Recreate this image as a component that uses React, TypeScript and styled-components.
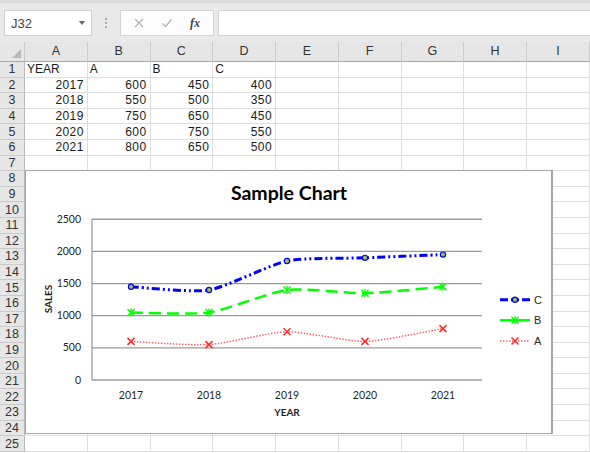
import React from 'react';
import styled, { createGlobalStyle } from 'styled-components';

const GlobalStyle = createGlobalStyle`
  html, body {
    margin: 0;
    padding: 0;
    background: #ffffff;
    overflow: hidden;
  }
  body {
    font-family: "Liberation Sans", Arial, sans-serif;
  }
`;

const COL_W = 62.75;
const ROW_H = 15.6;
const COLUMNS = ['A', 'B', 'C', 'D', 'E', 'F', 'G', 'H', 'I'];
const ROW_COUNT = 25;

const TABLE: (string | number)[][] = [
  ['YEAR', 'A', 'B', 'C'],
  [2017, 600, 450, 400],
  [2018, 550, 500, 350],
  [2019, 750, 650, 450],
  [2020, 600, 750, 550],
  [2021, 800, 650, 500],
];

const Page = styled.div`
  position: relative;
  width: 590px;
  height: 453px;
  overflow: hidden;
  background: #ffffff;
`;

/* ---------- formula bar ---------- */

const Toolbar = styled.div`
  display: flex;
  align-items: flex-start;
  height: 42px;
  padding: 7px 0 0 4px;
  box-sizing: border-box;
  background: #e9e9e9;
  border-top: 3px solid #dcdcdc;
`;

const NameBox = styled.div`
  display: flex;
  align-items: center;
  justify-content: space-between;
  width: 88px;
  height: 26px;
  box-sizing: border-box;
  padding: 0 6px 0 6px;
  background: #ffffff;
  border: 1px solid #cfcfcf;
  font-size: 13px;
  color: #444444;
`;

const Caret = styled.span`
  width: 0;
  height: 0;
  border-left: 3.5px solid transparent;
  border-right: 3.5px solid transparent;
  border-top: 4px solid #666666;
`;

const Grip = styled.div`
  display: flex;
  flex-direction: column;
  justify-content: center;
  gap: 2px;
  width: 28px;
  height: 26px;
  align-items: center;
`;

const GripDot = styled.span`
  width: 2px;
  height: 2px;
  background: #a8a8a8;
`;

const FormulaButtons = styled.div`
  display: flex;
  align-items: center;
  justify-content: space-around;
  width: 94px;
  height: 26px;
  box-sizing: border-box;
  padding: 0 4px;
  background: #fdfdfd;
  border: 1px solid #d4d4d4;
`;

const FxLabel = styled.span`
  font-family: "Liberation Serif", "Times New Roman", serif;
  font-style: italic;
  font-weight: bold;
  font-size: 12px;
  color: #444444;
  width: 14px;
  text-align: center;
`;

const FormulaInput = styled.div`
  flex: 1;
  height: 26px;
  margin-left: 4px;
  box-sizing: border-box;
  background: #ffffff;
  border: 1px solid #d4d4d4;
  border-right: none;
`;

/* ---------- sheet grid ---------- */

const Sheet = styled.div`
  display: grid;
  grid-template-columns: 25px repeat(${COLUMNS.length}, ${COL_W}px);
  grid-template-rows: 20px repeat(${ROW_COUNT}, ${ROW_H}px);
  font-size: 12px;
`;

const Corner = styled.div`
  position: relative;
  background: #e6e6e6;
  border-bottom: 1px solid #a8a8a8;
  border-right: 1px solid #c8c8c8;
  box-sizing: border-box;
`;

const CornerMark = styled.span`
  position: absolute;
  right: 3px;
  bottom: 3px;
  width: 0;
  height: 0;
  border-left: 9px solid transparent;
  border-bottom: 9px solid #b8b8b8;
`;

const ColHeader = styled.div`
  display: flex;
  align-items: flex-end;
  justify-content: center;
  padding-bottom: 1px;
  box-sizing: border-box;
  background: #e6e6e6;
  border-bottom: 1px solid #a8a8a8;
  border-right: 1px solid #cacaca;
  color: #333333;
  font-size: 12.5px;
  line-height: 17px;
`;

const RowHeader = styled.div`
  display: flex;
  align-items: center;
  justify-content: center;
  box-sizing: border-box;
  background: #e6e6e6;
  border-bottom: 1px solid #cacaca;
  border-right: 1px solid #b8b8b8;
  color: #333333;
  font-size: 12.5px;
`;

const Cell = styled.div<{ $numeric: boolean }>`
  display: flex;
  align-items: center;
  justify-content: ${(p) => (p.$numeric ? 'flex-end' : 'flex-start')};
  padding: 0 3px 0 2px;
  box-sizing: border-box;
  border-bottom: 1px solid #dedede;
  border-right: 1px solid #dedede;
  color: #1a1a1a;
  font-size: 12px;
  letter-spacing: ${(p) => (p.$numeric ? '0.4px' : '0')};
  white-space: nowrap;
  overflow: hidden;
`;

/* ---------- chart ---------- */

const ChartFrame = styled.div`
  position: absolute;
  left: 25px;
  top: 170px;
  width: 528px;
  height: 264px;
  box-sizing: border-box;
  background: #ffffff;
  border: 1px solid #a6a6a6;
  border-right-width: 2px;
`;

const ChartSvg = styled.svg`
  display: block;
  font-family: Lato, "Open Sans", sans-serif;
`;

type Pt = [number, number];

const PLOT_LEFT = 66;
const PLOT_RIGHT = 456;
const Y0 = 209;
const SCALE = 32.15 / 500;
const CAT_X = [105, 183, 261, 339, 417];
const YEARS = ['2017', '2018', '2019', '2020', '2021'];
const SMOOTH = 9;

const yOf = (v: number) => Y0 - v * SCALE;

const smoothPath = (pts: Pt[]) => {
  let d = `M${pts[0][0]},${pts[0][1]}`;
  for (let i = 0; i < pts.length - 1; i++) {
    const p0 = pts[i - 1] ?? pts[i];
    const p1 = pts[i];
    const p2 = pts[i + 1];
    const p3 = pts[i + 2] ?? p2;
    const c1: Pt = [p1[0] + (p2[0] - p0[0]) / SMOOTH, p1[1] + (p2[1] - p0[1]) / SMOOTH];
    const c2: Pt = [p2[0] - (p3[0] - p1[0]) / SMOOTH, p2[1] - (p3[1] - p1[1]) / SMOOTH];
    d += ` C${c1[0]},${c1[1]} ${c2[0]},${c2[1]} ${p2[0]},${p2[1]}`;
  }
  return d;
};

type MarkerKind = 'dot' | 'star' | 'cross';

interface Series {
  name: string;
  values: number[];
  color: string;
  width: number;
  dash: string;
  legendDash: string;
  marker: MarkerKind;
  opacity: number;
}

const a = TABLE.slice(1).map((r) => r[1] as number);
const b = TABLE.slice(1).map((r, i) => (r[2] as number) + a[i]);
const c = TABLE.slice(1).map((r, i) => (r[3] as number) + b[i]);

const SERIES: Series[] = [
  { name: 'C', values: c, color: '#0000ff', width: 3, dash: '8 3 2 3 2 3', legendDash: '8 3', marker: 'dot', opacity: 1 },
  { name: 'B', values: b, color: '#00ff00', width: 2.5, dash: '12 6', legendDash: 'none', marker: 'star', opacity: 1 },
  { name: 'A', values: a, color: '#ff3030', width: 1.5, dash: '1.5 1.5', legendDash: '1.5 1.5', marker: 'cross', opacity: 0.75 },
];

const Marker: React.FC<{ x: number; y: number; kind: MarkerKind; color: string }> = ({ x, y, kind, color }) => {
  if (kind === 'dot') {
    return <circle cx={x} cy={y} r={2.6} fill="#a3c43c" stroke={color} strokeWidth={1.2} />;
  }
  if (kind === 'star') {
    return (
      <g stroke={color} strokeWidth={1.4}>
        <line x1={x - 3.5} y1={y - 3.5} x2={x + 3.5} y2={y + 3.5} />
        <line x1={x - 3.5} y1={y + 3.5} x2={x + 3.5} y2={y - 3.5} />
        <line x1={x} y1={y - 4} x2={x} y2={y + 4} />
      </g>
    );
  }
  return (
    <g stroke={color} strokeWidth={1.6}>
      <line x1={x - 3.5} y1={y - 3.5} x2={x + 3.5} y2={y + 3.5} />
      <line x1={x - 3.5} y1={y + 3.5} x2={x + 3.5} y2={y - 3.5} />
    </g>
  );
};

const LEGEND_Y = [128.7, 149.3, 170];

const SalesChart: React.FC = () => (
  <ChartSvg width={525} height={262} viewBox="0 0 525 262">
    <text x={263} y={29} textAnchor="middle" fontSize={19.5} fontWeight={700} fill="#000">
      Sample Chart
    </text>

    {[0, 500, 1000, 1500, 2000, 2500].map((v) => (
      <g key={v}>
        <line
          x1={PLOT_LEFT}
          x2={PLOT_RIGHT}
          y1={yOf(v)}
          y2={yOf(v)}
          stroke="#9a9a9a"
          strokeWidth={1.3}
        />
        <text x={55} y={yOf(v) + 3.5} textAnchor="end" fontSize={10.5} fill="#1f1f1f">
          {v}
        </text>
      </g>
    ))}
    <line x1={PLOT_LEFT} x2={PLOT_LEFT} y1={yOf(2500)} y2={Y0} stroke="#9a9a9a" strokeWidth={1.3} />

    {YEARS.map((y, i) => (
      <text key={y} x={CAT_X[i]} y={227.5} textAnchor="middle" fontSize={10.5} fill="#1f1f1f">
        {y}
      </text>
    ))}

    <text x={261} y={245} textAnchor="middle" fontSize={10} fontWeight={700} fill="#1f1f1f">
      YEAR
    </text>
    <text
      x={0}
      y={0}
      transform="translate(25.5 128) rotate(-90)"
      textAnchor="middle"
      fontSize={10}
      fontWeight={700}
      fill="#1f1f1f"
    >
      SALES
    </text>

    {[...SERIES].reverse().map((s) => {
      const pts: Pt[] = s.values.map((v, i) => [CAT_X[i], yOf(v)]);
      return (
        <g key={s.name}>
          <path
            d={smoothPath(pts)}
            fill="none"
            stroke={s.color}
            strokeWidth={s.width}
            strokeDasharray={s.dash}
            opacity={s.opacity}
          />
          {pts.map(([x, y]) => (
            <Marker key={x} x={x} y={y} kind={s.marker} color={s.color} />
          ))}
        </g>
      );
    })}

    {SERIES.map((s, i) => (
      <g key={s.name}>
        <line
          x1={474}
          x2={504}
          y1={LEGEND_Y[i]}
          y2={LEGEND_Y[i]}
          stroke={s.color}
          strokeWidth={s.width}
          strokeDasharray={s.legendDash}
          opacity={s.opacity}
        />
        <Marker x={489} y={LEGEND_Y[i]} kind={s.marker} color={s.color} />
        <text x={508} y={LEGEND_Y[i] + 4} fontSize={11} fill="#262626" fontFamily="Liberation Sans, Arial, sans-serif">
          {s.name}
        </text>
      </g>
    ))}
  </ChartSvg>
);

/* ---------- app ---------- */

const App: React.FC = () => {
  const rows = Array.from({ length: ROW_COUNT }, (_, i) => i + 1);

  return (
    <Page>
      <GlobalStyle />
      <Toolbar>
        <NameBox>
          <span>J32</span>
          <Caret />
        </NameBox>
        <Grip>
          <GripDot />
          <GripDot />
          <GripDot />
        </Grip>
        <FormulaButtons>
          <svg width="14" height="14" viewBox="0 0 14 14">
            <path d="M3 3 L11 11 M11 3 L3 11" stroke="#b4b4b4" strokeWidth="1.3" fill="none" />
          </svg>
          <svg width="14" height="14" viewBox="0 0 14 14">
            <path d="M2.5 7.5 L5.5 10.5 L11.5 3.5" stroke="#b4b4b4" strokeWidth="1.3" fill="none" />
          </svg>
          <FxLabel>fx</FxLabel>
        </FormulaButtons>
        <FormulaInput />
      </Toolbar>

      <Sheet>
        <Corner>
          <CornerMark />
        </Corner>
        {COLUMNS.map((col) => (
          <ColHeader key={col}>{col}</ColHeader>
        ))}
        {rows.map((r) => (
          <React.Fragment key={r}>
            <RowHeader>{r}</RowHeader>
            {COLUMNS.map((col, ci) => {
              const v = TABLE[r - 1]?.[ci];
              return (
                <Cell key={col} $numeric={typeof v === 'number'}>
                  {v ?? ''}
                </Cell>
              );
            })}
          </React.Fragment>
        ))}
      </Sheet>

      <ChartFrame>
        <SalesChart />
      </ChartFrame>
    </Page>
  );
};

export default App;
